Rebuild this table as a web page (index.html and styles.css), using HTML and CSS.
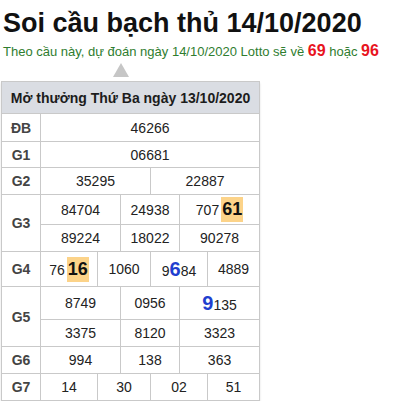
FILE: index.html
```html
<!DOCTYPE html>
<html lang="vi">
<head>
<meta charset="utf-8">
<link rel="stylesheet" href="styles.css">
</head>
<body>
<h1 class="title">Soi cầu bạch thủ 14/10/2020</h1>
<p class="lead">Theo cầu này, dự đoán ngày 14/10/2020 Lotto sẽ về <b class="hot">69</b> hoặc <b class="hot">96</b></p>
<div class="arrow-wrap"><span class="arrow"></span></div>
<table class="kq">
  <colgroup>
    <col class="c0"><col class="c1"><col class="c2"><col class="c3"><col class="c4"><col class="c5"><col class="c6">
  </colgroup>
  <tr class="r-head"><th colspan="7">Mở thưởng Thứ Ba ngày 13/10/2020</th></tr>
  <tr class="r-db"><td class="lbl">ĐB</td><td colspan="6">46266</td></tr>
  <tr class="r-g1"><td class="lbl">G1</td><td colspan="6">06681</td></tr>
  <tr class="r-n"><td class="lbl">G2</td><td colspan="3">35295</td><td colspan="3">22887</td></tr>
  <tr class="r-g3a"><td class="lbl" rowspan="2">G3</td><td colspan="2">84704</td><td colspan="2">24938</td><td colspan="2">707<span class="mark">61</span></td></tr>
  <tr class="r-n"><td colspan="2">89224</td><td colspan="2">18022</td><td colspan="2">90278</td></tr>
  <tr class="r-g4"><td class="lbl">G4</td><td>76<span class="mark">16</span></td><td colspan="2">1060</td><td colspan="2">9<span class="blue">6</span>84</td><td>4889</td></tr>
  <tr class="r-g5a"><td class="lbl" rowspan="2">G5</td><td colspan="2">8749</td><td colspan="2">0956</td><td colspan="2"><span class="blue">9</span>135</td></tr>
  <tr class="r-n"><td colspan="2">3375</td><td colspan="2">8120</td><td colspan="2">3323</td></tr>
  <tr class="r-n"><td class="lbl">G6</td><td colspan="2">994</td><td colspan="2">138</td><td colspan="2">363</td></tr>
  <tr class="r-n"><td class="lbl">G7</td><td>14</td><td colspan="2">30</td><td colspan="2">02</td><td>51</td></tr>
</table>
</body>
</html>
```
FILE: styles.css
```css
html, body {
  margin: 0;
  padding: 0;
  background: #fff;
}
body {
  font-family: "Liberation Sans", Arial, sans-serif;
  color: #222;
}
.title {
  margin: 6px 0 0 3px;
  font-size: 27px;
  line-height: 34px;
  font-weight: bold;
  color: #111;
  white-space: nowrap;
}
.lead {
  margin: 2px 0 0 3px;
  font-size: 13px;
  line-height: 18px;
  color: #2f7d2f;
  white-space: nowrap;
}
.hot {
  color: #e8141e;
  font-size: 16px;
}
.arrow-wrap {
  display: flex;
  padding-left: 113px;
  margin-top: 2px;
}
.arrow {
  width: 0;
  height: 0;
  border-left: 8px solid transparent;
  border-right: 8px solid transparent;
  border-bottom: 14px solid #c6c6c6;
}
.kq {
  margin: 4px 0 0 1px;
  border-collapse: collapse;
  table-layout: fixed;
  width: 258px;
  font-size: 14px;
  color: #222;
  box-shadow: 0 2px 2px rgba(0,0,0,0.12);
}
.c0 { width: 39px; }
.c1 { width: 57px; }
.c2 { width: 23px; }
.c3 { width: 30px; }
.c4 { width: 29px; }
.c5 { width: 28px; }
.c6 { width: 52px; }
.kq th, .kq td {
  border: 1px solid #c9c9c9;
  text-align: center;
  vertical-align: middle;
  padding: 0;
  white-space: nowrap;
}
.kq th {
  background: #dadde3;
  font-size: 14px;
  font-weight: bold;
  color: #1c1c1c;
  height: 31px;
}
.kq .lbl {
  font-weight: bold;
  color: #444;
}
.r-db td { height: 27px; }
.r-g1 td { height: 25px; }
.r-n td { height: 26px; }
.r-g3a td { height: 29px; }
.r-g4 td { height: 34px; }
.r-g5a td { height: 32px; }
.mark {
  display: inline-block;
  background: #fcd389;
  font-weight: bold;
  font-size: 18px;
  line-height: 25px;
  padding: 0 1px;
  margin-left: 2px;
  color: #111;
}
.blue {
  color: #1f3fcf;
  font-weight: bold;
  font-size: 20px;
}
```
